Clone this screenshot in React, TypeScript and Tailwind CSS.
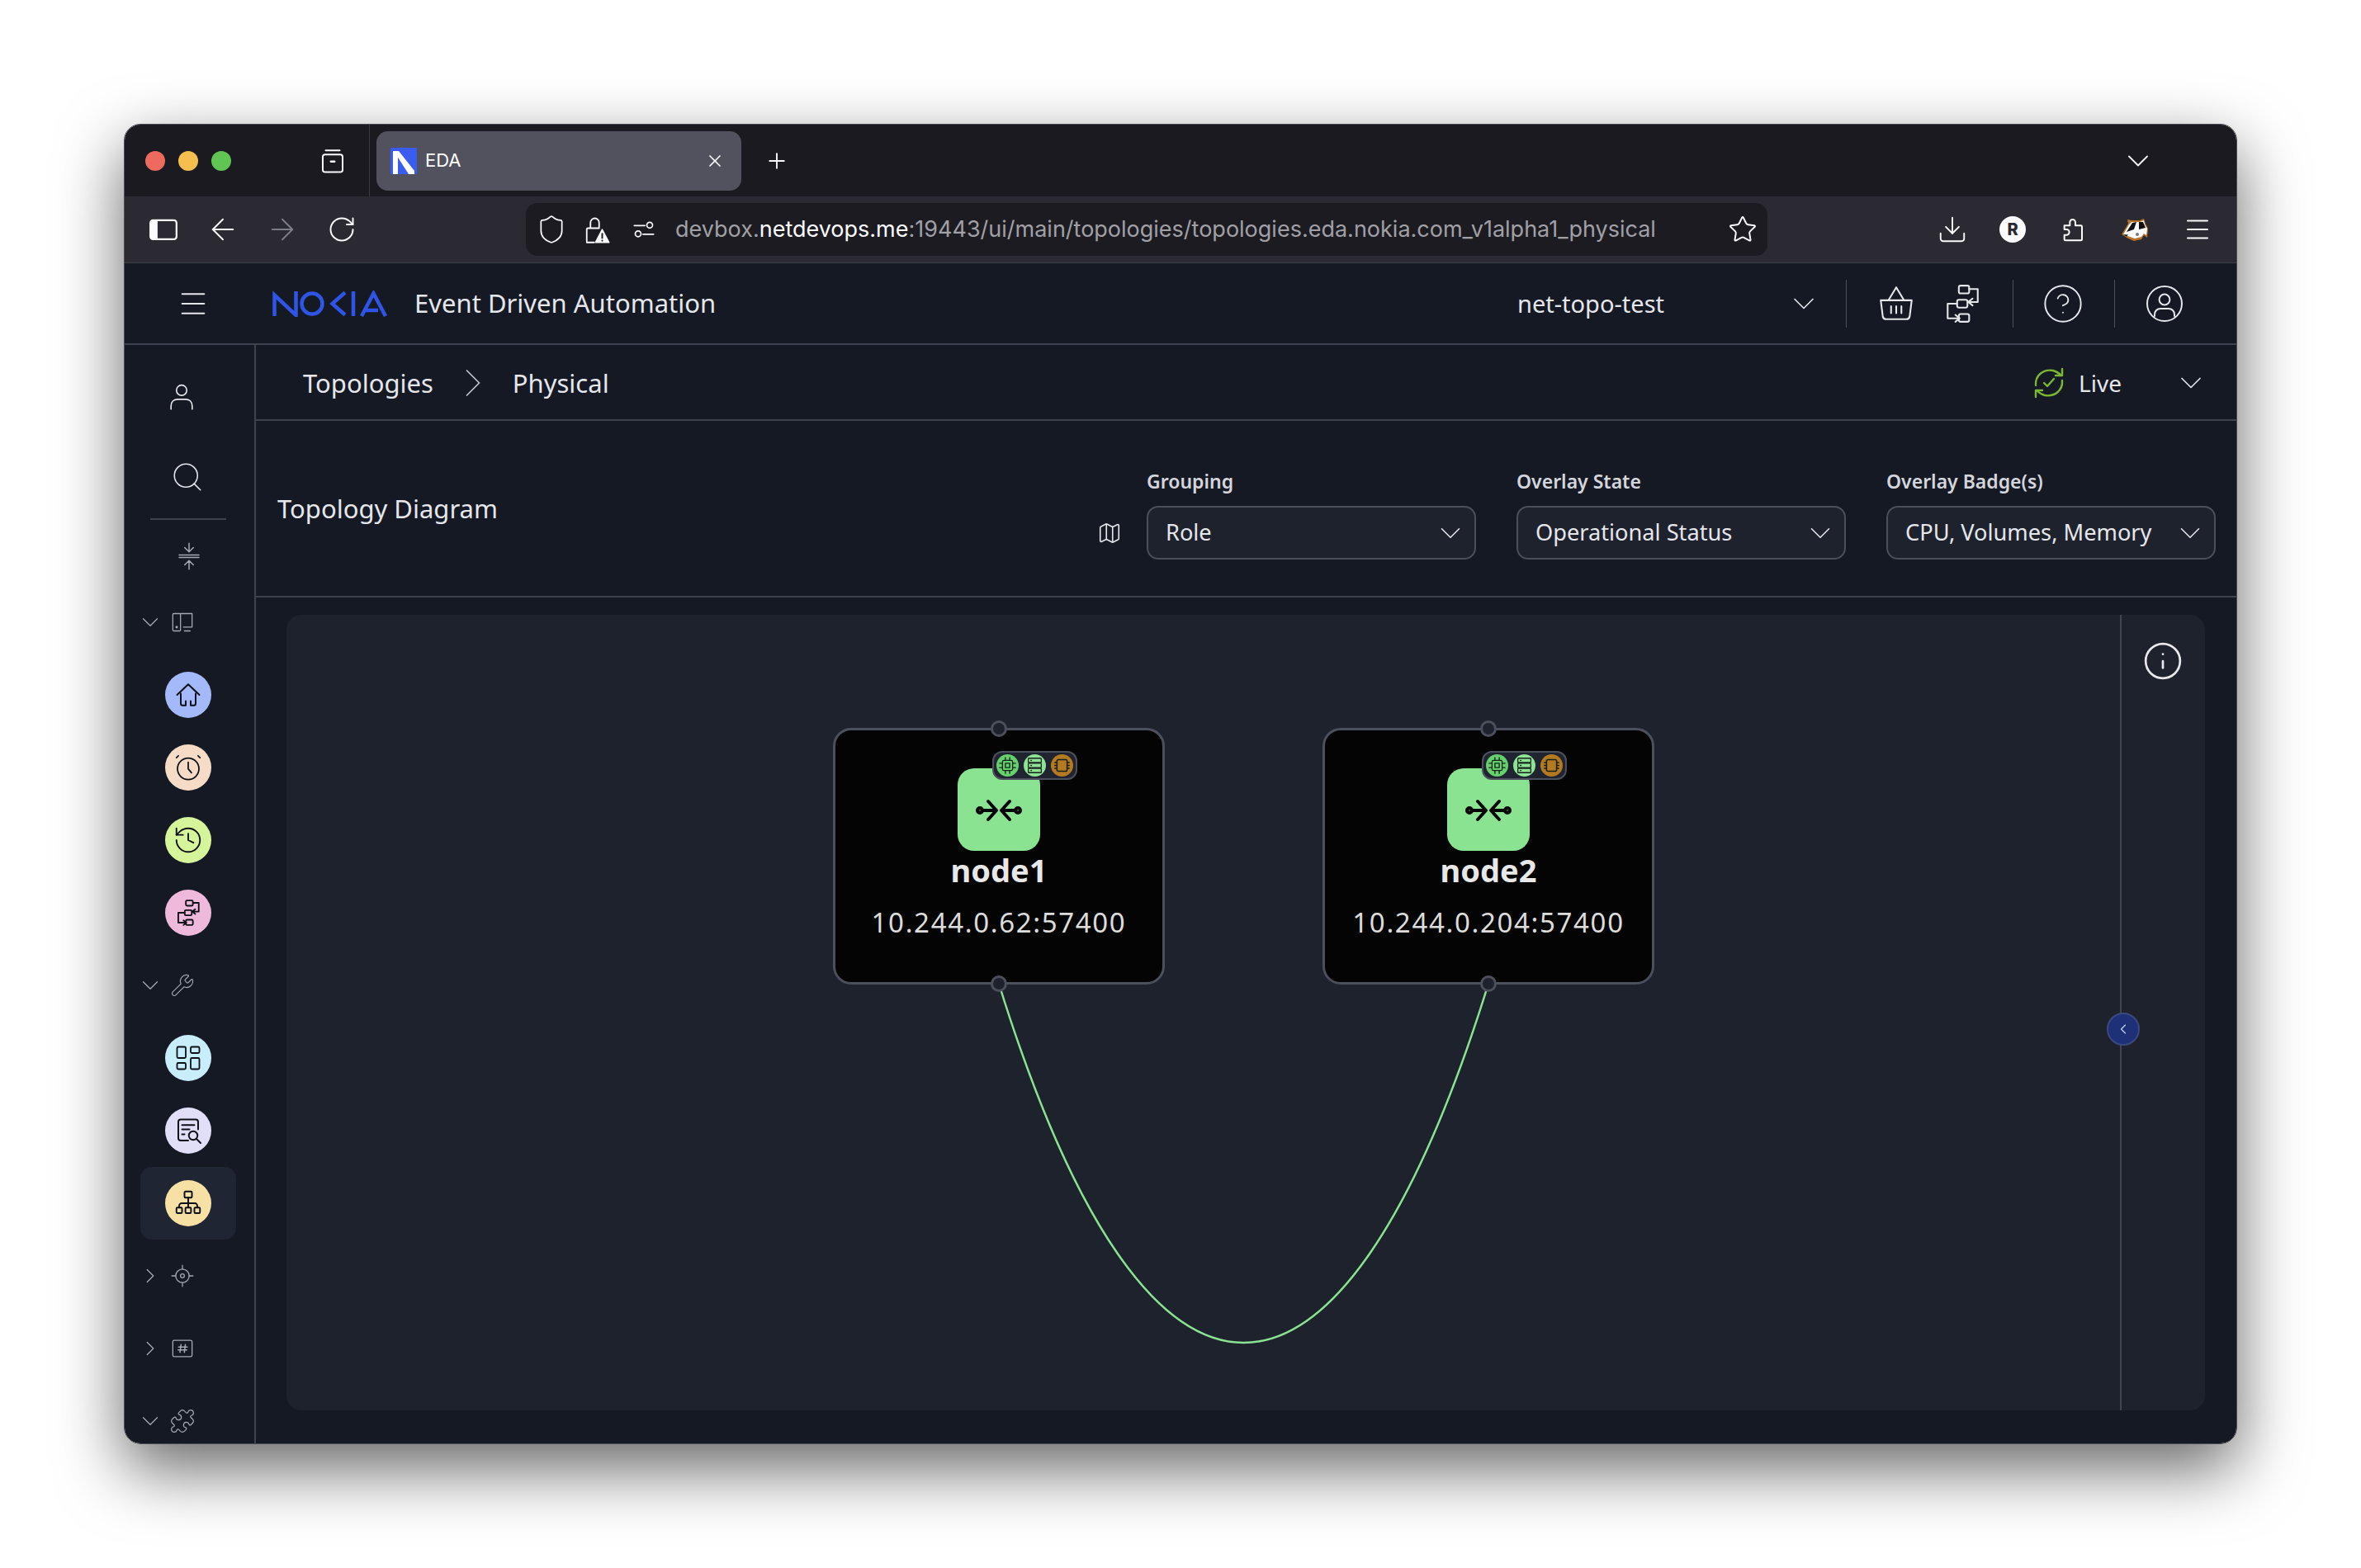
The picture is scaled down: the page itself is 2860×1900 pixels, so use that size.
import { ReactNode } from 'react';
import {
  ArrowLeft,
  ArrowRight,
  ChevronDown,
  ChevronLeft,
  ChevronRight,
  CircleHelp,
  Download,
  History,
  Info,
  LayoutDashboard,
  Map as MapIcon,
  Menu,
  Plus,
  Puzzle,
  RotateCw,
  Search,
  Shield,
  Star,
  Wrench,
  X,
} from 'lucide-react';

function Svg({ size, className, children }: { size: number; className?: string; children: ReactNode }) {
  return (
    <svg
      width={size}
      height={size}
      viewBox="0 0 24 24"
      fill="none"
      stroke="currentColor"
      strokeWidth={1.5}
      strokeLinecap="round"
      strokeLinejoin="round"
      className={className}
    >
      {children}
    </svg>
  );
}

function FlowIcon({ size, sw = 1.3 }: { size: number; sw?: number }) {
  return (
    <Svg size={size}>
      <g strokeWidth={sw}>
        <rect x="10" y="1.500" width="6" height="4.500" rx="1" />
        <rect x="9" y="9.750" width="6" height="4.500" rx="1" />
        <rect x="10" y="18" width="6" height="4.500" rx="1" />
        <path d="M16 3.500h5v7.500h-5M18 9l-2.500 2 2.500 2" />
        <path d="M9 12H3.500v8.500H10M8 18.500l2.500 2-2.500 2" />
      </g>
    </Svg>
  );
}

function NokiaLogo() {
  return (
    <svg width="139" height="32" viewBox="0 0 139 32" fill="none" stroke="#2f55e6" strokeWidth="4.500">
      <path d="M2.500 31V5.500L28.500 30V1" strokeLinejoin="miter" />
      <circle cx="48" cy="16" r="12.500" />
      <path d="M88 2.500 72.500 16 88 29.500" />
      <path d="M98 1v30" />
      <path d="M108 31 122.500 3.500 137 31M112 24h16" />
    </svg>
  );
}

function Badger() {
  return (
    <svg width="34" height="30" viewBox="0 0 34 30">
      <path d="M1 21 9 8 8 3l5 1h10l5-2 2 6 3 6-1 11-4-3-3 5-9 2-7-3z" fill="#b8742a" />
      <path d="M3 21 10 9l3-3h10l5-2 1 5 3 5-1 8-3-2-3 4-8 2-6-2z" fill="#fff" />
      <path d="M7 18 14 7l5-1-3 9zM22 6h5l3 7-8 2z" fill="#111" />
      <path d="M3 21l6 .500-2 2z" fill="#111" />
      <circle cx="20" cy="21" r="2" fill="#777" />
    </svg>
  );
}

function Favicon() {
  return (
    <svg width="32" height="32" viewBox="0 0 32 32">
      <rect width="32" height="32" fill="#3a5cf0" />
      <path d="M3 4h6v28H3zM4 4h6l19 24v4h-7z" fill="#fff" />
    </svg>
  );
}

function LiveIcon() {
  return (
    <svg width="38" height="38" viewBox="0 0 38 38" fill="none" stroke="#7cb82f" strokeWidth="2.400" strokeLinecap="round" strokeLinejoin="round">
      <path d="M3 22C2 10 12 2 24 4c4 1 7 3 10 6" />
      <path d="M35 2v8h-8" />
      <path d="M35 16c1 12-9 20-21 18-4-1-7-3-10-6" />
      <path d="M3 36v-8h8" />
      <path d="M13 19l4 4 8-9" />
    </svg>
  );
}

function TileIcon() {
  return (
    <svg width="100" height="100" viewBox="0 0 100 100" fill="none" stroke="#050505" strokeWidth="4" strokeLinecap="round" strokeLinejoin="round">
      <circle cx="27" cy="51" r="3" fill="#3d6b42" />
      <circle cx="73" cy="51" r="3" fill="#3d6b42" />
      <path d="M30 51h16M37 40l10 11-10 11" />
      <path d="M70 51H54M63 40 53 51l10 11" />
    </svg>
  );
}

function SideCircle({ bg, children }: { bg: string; children: ReactNode }) {
  return <div className={`w-[56px] h-[56px] rounded-full flex items-center justify-center text-[#0c0f16] ${bg}`}>{children}</div>;
}

function GroupRow({ open, icon }: { open: boolean; icon: ReactNode }) {
  return (
    <div className="h-[88px] shrink-0 w-[116px] ml-[19px] flex items-center text-[#a5a9b2]">
      <div className="w-[24px] flex justify-center">
        {open ? (
          <ChevronDown size={34} strokeWidth={0.9} className="shrink-0" />
        ) : (
          <ChevronRight size={30} strokeWidth={1} className="shrink-0" />
        )}
      </div>
      <div className="ml-[13px] w-[28px] flex justify-center">{icon}</div>
    </div>
  );
}

function CircleRow({ children, active }: { children: ReactNode; active?: boolean }) {
  return (
    <div className={`h-[88px] shrink-0 w-[116px] ml-[19px] flex items-center justify-center rounded-[14px] ${active ? 'bg-[#1f2532]' : ''}`}>
      {children}
    </div>
  );
}

function Sidebar() {
  return (
    <div className="w-[159px] shrink-0 border-r-2 border-[#3d424e] pt-[13px] flex flex-col text-[#e5e7eb] overflow-hidden">
      <div className="h-[98px] shrink-0 flex items-center pl-[47px] pt-[5px]">
        <Svg size={44}>
          <circle cx="12" cy="6.500" r="3.400" strokeWidth="0.9" />
          <path d="M5 19v-2c0-3 2-4.500 4.500-4.500h5c2.500 0 4.500 1.500 4.500 4.500v2" strokeWidth="0.9" />
        </Svg>
      </div>
      <div className="h-[98px] shrink-0 flex items-center pl-[55px]">
        <Search size={42} strokeWidth={0.9} />
      </div>
      <div className="h-[2px] shrink-0 w-[92px] ml-[31px] mt-[1px] bg-[#3d424e]" />
      <div className="h-[80px] shrink-0 pt-[8px] flex items-center justify-center pr-[2px] text-[#a5a9b2]">
        <Svg size={36}>
          <path d="M4 11h16M4 13h16M12 1.500v7M8.500 5l3.500 3.500L15.500 5M12 22.500v-7M8.500 19l3.500-3.500 3.500 3.500" strokeWidth="1" />
        </Svg>
      </div>
      <GroupRow
        open
        icon={
          <Svg size={28}>
            <rect x="2" y="3" width="8" height="18" rx="1" strokeWidth="1.100" />
            <path d="M10 3h12v14h-9M14 21h6" strokeWidth="1.100" />
            <circle cx="6" cy="17" r=".6" />
          </Svg>
        }
      />
      <CircleRow>
        <SideCircle bg="bg-[#a4b9f9]">
          <Svg size={36}>
            <path d="M3 12 12 3.500 21 12M6 11v8a1.500 1.500 0 0 0 1.500 1.500H10V17M18 11v8a1.500 1.500 0 0 1-1.500 1.500H14V17" strokeWidth="1.300" />
          </Svg>
        </SideCircle>
      </CircleRow>
      <CircleRow>
        <SideCircle bg="bg-[#f6dcc6]">
          <Svg size={38}>
            <circle cx="12" cy="13" r="8.200" strokeWidth="1.100" />
            <path d="M12 8v5l2.500 3M3 4.500 4.500 3M21 4.500 19.500 3" strokeWidth="1.100" />
          </Svg>
        </SideCircle>
      </CircleRow>
      <CircleRow>
        <SideCircle bg="bg-[#d6f59a]">
          <History size={38} strokeWidth={1.200} />
        </SideCircle>
      </CircleRow>
      <CircleRow>
        <SideCircle bg="bg-[#eeb9da]">
          <FlowIcon size={34} />
        </SideCircle>
      </CircleRow>
      <GroupRow open icon={<Wrench size={30} strokeWidth={0.9} className="shrink-0" />} />
      <CircleRow>
        <SideCircle bg="bg-[#c9eefb]">
          <LayoutDashboard size={36} strokeWidth={1.200} />
        </SideCircle>
      </CircleRow>
      <CircleRow>
        <SideCircle bg="bg-[#e1dff8]">
          <Svg size={36}>
            <path d="M12 20H6a2 2 0 0 1-2-2V5a2 2 0 0 1 2-2h12a2 2 0 0 1 2 2v6" strokeWidth="1.300" />
            <path d="M7 7.500h10M7 11h6M7 15h2" strokeWidth="1.300" />
            <circle cx="16" cy="16" r="3.500" strokeWidth="1.300" />
            <path d="m19 19 3 3" strokeWidth="1.300" />
          </Svg>
        </SideCircle>
      </CircleRow>
      <CircleRow active>
        <SideCircle bg="bg-[#f6e0a4]">
          <Svg size={36}>
            <g strokeWidth="1.300">
              <rect x="9" y="2.500" width="6" height="5" rx=".8" />
              <rect x="2.500" y="15.500" width="4.500" height="4.500" rx=".8" />
              <rect x="9.750" y="15.500" width="4.500" height="4.500" rx=".8" />
              <rect x="17" y="15.500" width="4.500" height="4.500" rx=".8" />
              <path d="M12 7.500v8M4.700 15.500v-1.500c0-1 1-2 2-2h10.600c1 0 2 1 2 2v1.500" />
            </g>
          </Svg>
        </SideCircle>
      </CircleRow>
      <GroupRow
        open={false}
        icon={
          <Svg size={28}>
            <circle cx="12" cy="12" r="7" strokeWidth="1.100" />
            <circle cx="12" cy="12" r="2" strokeWidth="1.100" />
            <path d="M12 1v4M12 19v4M1 12h4M19 12h4" strokeWidth="1.100" />
          </Svg>
        }
      />
      <GroupRow
        open={false}
        icon={
          <Svg size={28}>
            <rect x="2" y="3.500" width="20" height="17" rx="1.500" strokeWidth="1.100" />
            <path d="M10.500 8 9.500 16M15 8l-1 8M8 10.500h9M7.500 13.500h9" strokeWidth="1.300" />
          </Svg>
        }
      />
      <GroupRow open icon={<Puzzle size={32} strokeWidth={0.9} className="shrink-0" />} />
    </div>
  );
}

function NavSeparator() {
  return <div className="w-[1px] h-[58px] bg-[#4a4f5c]" />;
}

function SelectField({ label, value, first }: { label: string; value: string; first?: boolean }) {
  return (
    <div className={`w-[399px] ${first ? '' : 'ml-[49px]'}`}>
      <div className="h-[28px] leading-[28px] text-[23px] font-semibold text-[#d4d6dc] mb-[16px]">{label}</div>
      <div className="h-[65px] rounded-[14px] border-2 border-[#4a4f5c] bg-[#1e222d] flex items-center pl-[21px] pr-[8px] text-[27.200px] text-[#e5e7eb]">
        <span className="flex-1 whitespace-nowrap">{value}</span>
        <ChevronDown size={42} strokeWidth={0.9} className="shrink-0" />
      </div>
    </div>
  );
}

function BadgeDot({ bg, children }: { bg: string; children: ReactNode }) {
  return <div className={`w-[27px] h-[27px] rounded-full flex items-center justify-center text-[#15201a] ${bg}`}>{children}</div>;
}

function TopoNode({ name, addr, left }: { name: string; addr: string; left: string }) {
  return (
    <div className={`absolute top-[137px] w-[402px] h-[311px] rounded-[22px] border-[3px] border-[#4b505c] bg-[#050404] flex flex-col items-center pt-[46px] ${left}`}>
      <div className="w-[100px] h-[100px] rounded-[20px] bg-[#8ae391]">
        <TileIcon />
      </div>
      <div className="h-[46px] leading-[46px] text-[38px] font-bold text-[#e8e8e8]">{name}</div>
      <div className="mt-[18px] h-[46px] leading-[46px] text-[33px] tracking-[1.650px] text-[#dcdcdc]">{addr}</div>

      <div className="absolute left-[190px] top-[25px] w-[103px] h-[35px] rounded-[12px] border-2 border-[#4b505c] bg-[#1f2430] flex items-center justify-between px-[3px]">
        <BadgeDot bg="bg-[#66d06c]">
          <Svg size={21}>
            <rect x="5" y="5" width="14" height="14" rx="2" />
            <rect x="9" y="9" width="6" height="6" />
            <path d="M9 1v4M15 1v4M9 19v4M15 19v4M1 9h4M1 15h4M19 9h4M19 15h4" />
          </Svg>
        </BadgeDot>
        <BadgeDot bg="bg-[#8ee495]">
          <Svg size={21}>
            <rect x="3" y="2" width="18" height="6" rx="1" />
            <rect x="3" y="9" width="18" height="6" rx="1" />
            <rect x="3" y="16" width="18" height="6" rx="1" />
            <path d="M6.500 5h1M6.500 12h1M6.500 19h1" />
          </Svg>
        </BadgeDot>
        <BadgeDot bg="bg-[#b47a20]">
          <Svg size={21}>
            <rect x="5" y="4" width="14" height="16" rx="2" strokeWidth="1.800" />
            <path d="M2 8h3M2 12h3M2 16h3M19 8h3M19 12h3M19 16h3" />
          </Svg>
        </BadgeDot>
      </div>

      <div className="absolute left-[188px] -top-[12px] w-[20px] h-[20px] rounded-full border-[3px] border-[#4b505c] bg-[#1e222d]" />
      <div className="absolute left-[188px] -bottom-[12px] w-[20px] h-[20px] rounded-full border-[3px] border-[#4b505c] bg-[#1e222d]" />
    </div>
  );
}

export default function App() {
  return (
    <div className="w-[2860px] h-[1900px] bg-white pt-[150px] pl-[150px] font-['Noto_Sans',sans-serif]">
      <div className="w-[2560px] h-[1600px] rounded-[20px] overflow-hidden border border-[#4c4c52] flex flex-col shadow-[0_30px_80px_rgba(0,0,0,0.6)]">
        {/* browser tab strip */}
        <div className="h-[87px] shrink-0 bg-[#1a1a20] flex items-center pl-[25px] text-[#fbfbfe] font-['Inter',sans-serif]">
          <div className="w-[24px] h-[24px] rounded-full bg-[#ec6a5e]" />
          <div className="w-[24px] h-[24px] rounded-full bg-[#f4bf4f] ml-[16px]" />
          <div className="w-[24px] h-[24px] rounded-full bg-[#61c554] ml-[16px]" />
          <div className="ml-[106px] w-[32px]">
            <Svg size={34}>
              <path d="M6 3h12" strokeWidth="1.400" />
              <rect x="3.500" y="6.500" width="17" height="15" rx="2" strokeWidth="1.400" />
              <path d="M10.500 12.500h3" strokeWidth="1.800" />
            </Svg>
          </div>
          <div className="ml-[29px] w-[1px] self-stretch bg-[#3a3a42]" />
          <div className="ml-[8px] w-[442px] h-[72px] rounded-[14px] bg-[#52525e] flex items-center pl-[17px] pr-[20px]">
            <Favicon />
            <span className="ml-[10px] text-[22px] flex-1">EDA</span>
            <X size={24} strokeWidth={1.700} />
          </div>
          <Plus size={30} strokeWidth={1.500} className="ml-[28px]" />
          <ChevronDown size={44} strokeWidth={1} className="ml-auto mr-[97px]" />
        </div>

        {/* browser toolbar */}
        <div className="h-[80px] shrink-0 bg-[#2b2a33] flex items-center pl-[28px] text-[#fbfbfe] font-['Inter',sans-serif]">
          <Svg size={38}>
            <rect x="2" y="5" width="20" height="14.500" rx="2" strokeWidth="1.400" />
            <rect x="2.500" y="5.500" width="5" height="13.500" fill="currentColor" stroke="none" />
          </Svg>
          <ArrowLeft size={42} strokeWidth={1.100} className="ml-[32px]" />
          <ArrowRight size={42} strokeWidth={1.100} className="ml-[30px] text-[#7d7d84]" />
          <RotateCw size={36} strokeWidth={1.300} className="ml-[33px]" />
          <div className="ml-[205px] w-[1504px] h-[64px] rounded-[14px] bg-[#1c1b22] flex items-center pl-[12px] pr-[12px]">
            <Shield size={38} strokeWidth={1.100} />
            <div className="ml-[17px] w-[36px] h-[36px]">
              <Svg size={36}>
                <path d="M7.500 11V6.500a3.500 3.500 0 0 1 7 0V11M4.500 21.500V12a1 1 0 0 1 1-1h9M4.500 22.500h6" strokeWidth="1.200" />
                <path d="M17 12l5.500 10.500h-11z" fill="currentColor" strokeWidth="1" />
                <path d="M17 15.500v3.500M17 21v.2" stroke="#1c1b22" strokeWidth="1.300" />
              </Svg>
            </div>
            <div className="ml-[26px] w-[28px]">
              <Svg size={28}>
                <path d="M2 8h11M11 17h11" strokeWidth="1.500" />
                <circle cx="18" cy="7.500" r="3" strokeWidth="1.500" />
                <circle cx="6" cy="16.500" r="3" strokeWidth="1.500" />
              </Svg>
            </div>
            <div className="ml-[24px] flex-1 text-[27px] text-[#a0a0a6] whitespace-nowrap">
              devbox.<span className="text-[#fbfbfe]">netdevops.me</span>:19443/ui/main/topologies/topologies.eda.nokia.com_v1alpha1_physical
            </div>
            <Star size={36} strokeWidth={1.300} />
          </div>
          <Download size={38} strokeWidth={1.200} className="ml-[205px]" />
          <div className="ml-[38px] w-[32px] h-[32px] rounded-full bg-[#fbfbfe] text-[#2b2a33] text-[20px] font-extrabold flex items-center justify-center">R</div>
          <div className="ml-[40px]">
            <Svg size={32}>
              <path d="M5 8.500h5v-3a2.500 2.500 0 0 1 5 0v3h5a1 1 0 0 1 1 1V21a1 1 0 0 1-1 1H6a1 1 0 0 1-1-1v-4h2a2.500 2.500 0 0 0 0-5H5z" strokeWidth="1.500" />
            </Svg>
          </div>
          <div className="ml-[43px] w-[34px]">
            <Badger />
          </div>
          <Menu size={36} strokeWidth={1.300} className="ml-[41px]" />
        </div>

        {/* app header */}
        <div className="h-[100px] shrink-0 border-t border-[#3f3f47] border-b-2 border-b-[#3d424e] bg-[#141924] flex items-center pl-[63px] pr-[63px] text-[#e5e7eb]">
          <Menu size={40} strokeWidth={1.200} />
          <div className="ml-[76px]">
            <NokiaLogo />
          </div>
          <span className="ml-[33px] text-[31px]">Event Driven Automation</span>
          <span className="ml-auto text-[29px]">net-topo-test</span>
          <ChevronDown size={44} strokeWidth={0.9} className="ml-[147px]" />
          <div className="ml-[29px]">
            <NavSeparator />
          </div>
          <div className="ml-[35px]">
            <Svg size={50}>
              <path d="M7.500 10 12 2.500 16.500 10" strokeWidth="1" />
              <path d="M3 10h18l-1.200 9.500a2 2 0 0 1-2 1.500H6.200a2 2 0 0 1-2-1.500z" strokeWidth="1" />
              <path d="M9 13.500v4M12 13.500v4M15 13.500v4" strokeWidth="1" />
            </Svg>
          </div>
          <div className="ml-[30px]">
            <FlowIcon size={50} sw={1} />
          </div>
          <div className="ml-[36px]">
            <NavSeparator />
          </div>
          <CircleHelp size={52} strokeWidth={0.9} className="ml-[34px]" />
          <div className="ml-[36px]">
            <NavSeparator />
          </div>
          <div className="ml-[36px]">
            <Svg size={48}>
              <circle cx="12" cy="12" r="10.500" strokeWidth="1" />
              <circle cx="12" cy="9.500" r="3.200" strokeWidth="1" />
              <path d="M6 19.500v-1c0-2 1.500-3.500 3.500-3.500h5c2 0 3.500 1.500 3.500 3.500v1" strokeWidth="1" />
            </Svg>
          </div>
        </div>

        <div className="flex-1 flex min-h-0 bg-[#141924]">
          <Sidebar />

          <div className="flex-1 min-w-0 flex flex-col text-[#e5e7eb]">
            {/* breadcrumb */}
            <div className="h-[92px] shrink-0 border-b-2 border-[#3d424e] flex items-center pt-[2px] pl-[57px] pr-[33px] text-[31px]">
              <span>Topologies</span>
              <ChevronRight size={60} strokeWidth={0.7} className="ml-[18px] text-[#c4c7ce]" />
              <span className="ml-[18px]">Physical</span>
              <div className="ml-auto">
                <LiveIcon />
              </div>
              <span className="ml-[17px] text-[28px]">Live</span>
              <ChevronDown size={44} strokeWidth={0.9} className="ml-[62px]" />
            </div>

            {/* filters */}
            <div className="h-[214px] shrink-0 border-b-2 border-[#3d424e] flex items-center pl-[26px] pr-[25px]">
              <span className="text-[31px]">Topology Diagram</span>
              <div className="ml-auto self-start mt-[59px] flex items-end">
                <div className="h-[65px] flex items-center mr-[30px]">
                  <MapIcon size={30} strokeWidth={1.300} />
                </div>
                <SelectField first label="Grouping" value="Role" />
                <SelectField label="Overlay State" value="Operational Status" />
                <SelectField label="Overlay Badge(s)" value="CPU, Volumes, Memory" />
              </div>
            </div>

            {/* canvas */}
            <div className="flex-1 min-h-0 pl-[37px] pr-[38px] pt-[21px] pb-[40px]">
              <div className="relative h-full rounded-[18px] bg-[#1e222d] overflow-hidden">
                <svg width="2323" height="964" className="absolute left-0 top-0" fill="none">
                  <path d="M863 447C1043 1027 1276 1027 1456 447" stroke="#8ae391" strokeWidth="2.500" />
                </svg>
                <TopoNode left="left-[662px]" name="node1" addr="10.244.0.62:57400" />
                <TopoNode left="left-[1255px]" name="node2" addr="10.244.0.204:57400" />

                <div className="absolute left-[2221px] top-0 bottom-0 w-[2px] bg-[#3f4452]" />
                <Info size={50} strokeWidth={1.300} className="absolute left-[2248px] top-[31px] text-[#e8e8ea]" />
                <div className="absolute left-[2205px] top-[482px] w-[40px] h-[40px] rounded-full border-2 border-[#3a4a80] bg-[#1e3178] flex items-center justify-center text-[#cdd6f5]">
                  <ChevronLeft size={20} strokeWidth={1.300} />
                </div>
              </div>
            </div>
          </div>
        </div>
      </div>
    </div>
  );
}
